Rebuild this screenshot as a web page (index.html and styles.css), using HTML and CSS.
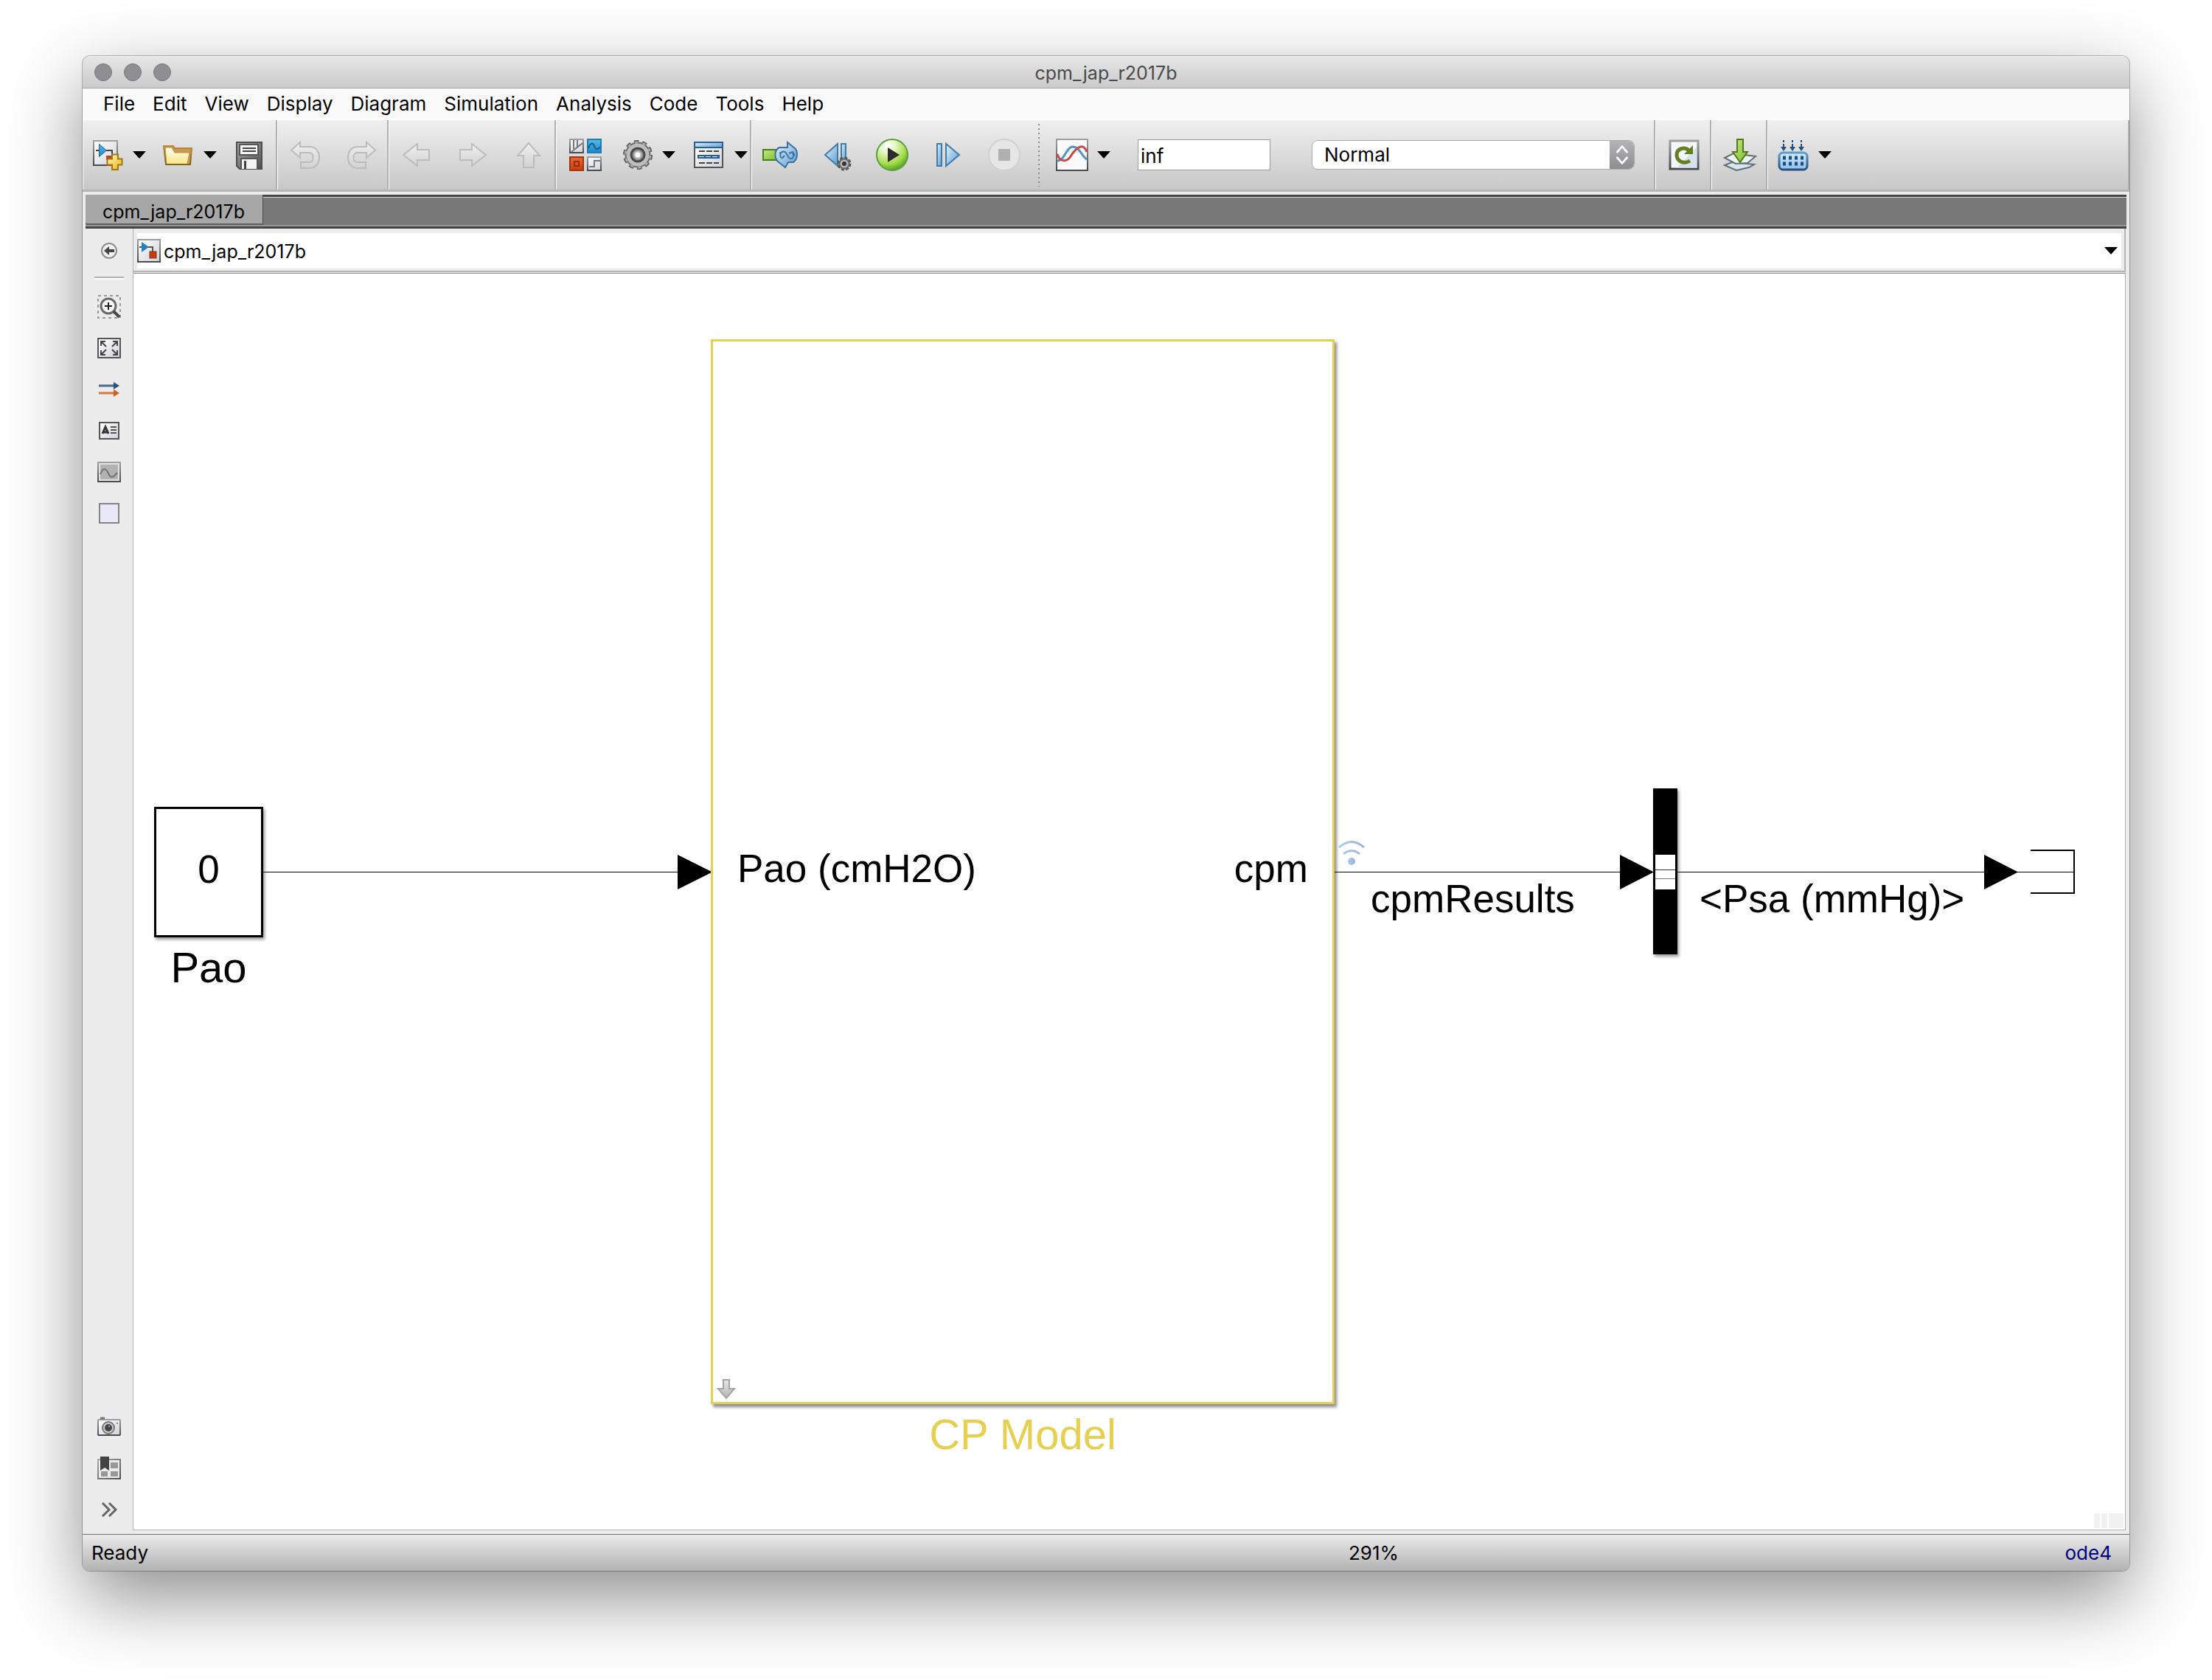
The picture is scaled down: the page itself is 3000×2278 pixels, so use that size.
FILE: index.html
```html
<!DOCTYPE html>
<html lang="en">
<head>
<meta charset="utf-8">
<title>cpm_jap_r2017b</title>
<link rel="stylesheet" href="styles.css">
</head>
<body>
<svg class="defs" width="0" height="0" aria-hidden="true">
  <defs>
    <linearGradient id="paper" x1="0" y1="0" x2="1" y2="1"><stop offset="0" stop-color="#fff"/><stop offset="1" stop-color="#cfd3da"/></linearGradient>
    <linearGradient id="frame" x1="0" y1="0" x2="0" y2="1"><stop offset="0" stop-color="#a0a0a0"/><stop offset="1" stop-color="#484a4c"/></linearGradient>
    <linearGradient id="gold" x1="0" y1="0" x2="1" y2="1"><stop offset="0" stop-color="#fffbd0"/><stop offset="1" stop-color="#e8b400"/></linearGradient>
    <linearGradient id="folder" x1="0" y1="0" x2="0" y2="1"><stop offset="0" stop-color="#fffdf2"/><stop offset="1" stop-color="#f7e684"/></linearGradient>
    <linearGradient id="wood" x1="0" y1="0" x2="0" y2="1"><stop offset="0" stop-color="#c08a30"/><stop offset="1" stop-color="#7d6020"/></linearGradient>
    <linearGradient id="steel" x1="0" y1="0" x2="1" y2="1"><stop offset="0" stop-color="#a8a8a8"/><stop offset="1" stop-color="#505050"/></linearGradient>
    <linearGradient id="ghost" x1="0" y1="0" x2="0" y2="1"><stop offset="0" stop-color="#f0f0f0"/><stop offset="1" stop-color="#d2d2d2"/></linearGradient>
    <linearGradient id="sky" x1="0" y1="0" x2="1" y2="1"><stop offset="0" stop-color="#e4f3fd"/><stop offset="1" stop-color="#5a9cd0"/></linearGradient>
    <linearGradient id="azure" x1="0" y1="0" x2="0" y2="1"><stop offset="0" stop-color="#5cbbe4"/><stop offset="1" stop-color="#1888c4"/></linearGradient>
    <linearGradient id="blueEdge" x1="0" y1="0" x2="0" y2="1"><stop offset="0" stop-color="#5f9cc8"/><stop offset="1" stop-color="#254e7c"/></linearGradient>
    <linearGradient id="rust" x1="0" y1="0" x2="0" y2="1"><stop offset="0" stop-color="#e8683c"/><stop offset="1" stop-color="#cc3c08"/></linearGradient>
    <linearGradient id="leaf" x1="0" y1="0" x2="1" y2="1"><stop offset="0" stop-color="#c4e880"/><stop offset="1" stop-color="#7cc030"/></linearGradient>
    <radialGradient id="play" cx=".35" cy=".2" r=".85"><stop offset="0" stop-color="#fff"/><stop offset=".3" stop-color="#e4f6c4"/><stop offset=".7" stop-color="#a4dc48"/><stop offset="1" stop-color="#4c9c20"/></radialGradient>
    <linearGradient id="cage" x1="0" y1="0" x2="0" y2="1"><stop offset="0" stop-color="#d8ecfc"/><stop offset="1" stop-color="#90bce8"/></linearGradient>
    <linearGradient id="arrowDown" x1="0" y1="0" x2="0" y2="1"><stop offset="0" stop-color="#e6e6e6"/><stop offset="1" stop-color="#b4b4b4"/></linearGradient>
    <linearGradient id="wave" x1="0" y1="0" x2="1" y2="0"><stop offset="0" stop-color="#a9d0ea"/><stop offset="1" stop-color="#9fb0d4"/></linearGradient>
  </defs>
</svg>

<main class="window">
  <header class="titlebar">
    <div class="lights"><button class="light" aria-label="Close"></button><button class="light" aria-label="Minimize"></button><button class="light" aria-label="Zoom"></button></div>
    <h1 class="title">cpm_jap_r2017b</h1>
  </header>

  <nav class="menubar" aria-label="Menu">
    <button class="menu">File</button>
    <button class="menu">Edit</button>
    <button class="menu">View</button>
    <button class="menu">Display</button>
    <button class="menu">Diagram</button>
    <button class="menu">Simulation</button>
    <button class="menu">Analysis</button>
    <button class="menu">Code</button>
    <button class="menu">Tools</button>
    <button class="menu">Help</button>
  </nav>

  <div class="toolbar" role="toolbar" aria-label="Model">
    <div class="group group-file">
      <div class="split">
        <button class="tool" aria-label="New model"><svg viewBox="0 0 48 48">
          <rect x="5" y="5" width="32" height="33" fill="url(#paper)" stroke="url(#frame)" stroke-width="2"/>
          <path d="M8 18h6M22 18h8v7" fill="none" stroke="#444" stroke-width="2"/>
          <path d="M12.500 9.500v17l10-8.500z" fill="url(#azure)" stroke="#1f649a" stroke-width="1"/>
          <rect x="22" y="25" width="8" height="6" fill="#b8452c"/>
          <path d="M30 23.500h8v6h5.500v8H38v6.500h-8v-6.500h-6.500v-8H30z" fill="url(#gold)" stroke="#a87412" stroke-width="2"/>
        </svg></button>
        <button class="caret" aria-label="New options"><svg viewBox="0 0 18 10"><path d="M0 0h18L9 10z"/></svg></button>
      </div>
      <div class="split">
        <button class="tool" aria-label="Open"><svg viewBox="0 0 48 48">
          <path d="M4 12h13l2 3h23l-2 22H7z" fill="#c59a55" stroke="url(#wood)" stroke-width="2"/>
          <path d="M6 14h9l4 7h20l-3 16H8z" fill="url(#folder)" stroke="#b89040" stroke-width="1"/>
          <path d="M7 37h33" stroke="#806424" stroke-width="2"/>
        </svg></button>
        <button class="caret" aria-label="Open options"><svg viewBox="0 0 18 10"><path d="M0 0h18L9 10z"/></svg></button>
      </div>
      <button class="tool" aria-label="Save"><svg viewBox="0 0 48 48">
        <path d="M7 7h34v36H11l-4-4z" fill="url(#steel)" stroke="#4e4e4e" stroke-width="2"/>
        <rect x="11" y="10" width="25" height="14" fill="#f4f4f4" stroke="#555" stroke-width="2"/>
        <path d="M15 15h18M15 19h18" stroke="#444" stroke-width="2"/>
        <path d="M13 43V29h22v14" fill="#f4f4f4" stroke="#555" stroke-width="2"/>
        <path d="M17 32h3v11h-3z" fill="#444"/>
      </svg></button>
    </div>

    <div class="group">
      <button class="tool" aria-label="Undo"><svg viewBox="0 0 48 48"><path d="M5 17.500L17 7v6h14c16 1 16 28 0 29H18v-8h12c6-1 6-12 0-13H17v7z" fill="url(#ghost)" stroke="#bcbcbc" stroke-width="2"/></svg></button>
      <button class="tool" aria-label="Redo"><svg viewBox="0 0 48 48"><path d="M43 17.500L31 7v6H18c-16 1-16 28 0 29h12v-8H18c-6-1-6-12 0-13h13v7z" fill="url(#ghost)" stroke="#bcbcbc" stroke-width="2"/></svg></button>
    </div>

    <div class="group">
      <button class="tool" aria-label="Back"><svg viewBox="0 0 48 48"><path d="M6 24L25 9v8h16v14H25v8z" fill="url(#ghost)" stroke="#bcbcbc" stroke-width="2"/></svg></button>
      <button class="tool" aria-label="Forward"><svg viewBox="0 0 48 48"><path d="M42 24L23 9v8H7v14h16v8z" fill="url(#ghost)" stroke="#bcbcbc" stroke-width="2"/></svg></button>
      <button class="tool" aria-label="Up to parent"><svg viewBox="0 0 48 48"><path d="M24 8L9 25h8v16h14V25h8z" fill="url(#ghost)" stroke="#bcbcbc" stroke-width="2"/></svg></button>
    </div>

    <div class="group group-config">
      <button class="tool" aria-label="Library browser"><svg viewBox="0 0 48 48">
        <rect x="3" y="3" width="18" height="18" fill="url(#paper)" stroke="url(#frame)" stroke-width="2"/>
        <path d="M8 4v12M13 4v9M5 20L20 8" fill="none" stroke="#777" stroke-width="2"/>
        <rect x="27" y="3" width="18" height="18" fill="url(#azure)" stroke="#1d7db4" stroke-width="2"/>
        <path d="M28 15c3-8 6-8 8-3s4 6 8 1" fill="none" stroke="#0f5c90" stroke-width="2"/>
        <rect x="3" y="27" width="18" height="18" fill="url(#rust)" stroke="#9c3610" stroke-width="2"/>
        <rect x="9" y="33" width="6" height="6" fill="#e0562c" stroke="#952e08" stroke-width="2"/>
        <rect x="27" y="27" width="18" height="18" fill="url(#paper)" stroke="url(#frame)" stroke-width="2"/>
        <path d="M29 40h7v-8h8" fill="none" stroke="#777" stroke-width="2"/>
      </svg></button>
      <div class="split">
        <button class="tool" aria-label="Model settings"><svg viewBox="0 0 48 48">
          <circle cx="25" cy="24" r="17" fill="none" stroke="#555" stroke-width="6" stroke-dasharray="6 4.680"/>
          <circle cx="25" cy="24" r="13" fill="none" stroke="#bdbdbd" stroke-width="6"/>
          <circle cx="25" cy="24" r="16.500" fill="none" stroke="#6a6a6a" stroke-width="2"/>
          <circle cx="25" cy="24" r="17" fill="none" stroke="#aaa" stroke-width="3" stroke-dasharray="4 6.680" stroke-dashoffset="-1"/>
          <circle cx="25" cy="24" r="9" fill="#909090" stroke="#484848" stroke-width="3"/>
          <circle cx="25" cy="24" r="4.500" fill="#fff" stroke="#bbb" stroke-width="2"/>
        </svg></button>
        <button class="caret" aria-label="Settings options"><svg viewBox="0 0 18 10"><path d="M0 0h18L9 10z"/></svg></button>
      </div>
      <div class="split">
        <button class="tool" aria-label="Model explorer"><svg viewBox="0 0 48 48">
          <rect x="4" y="7" width="38" height="34" fill="url(#paper)" stroke="#555" stroke-width="2"/>
          <rect x="4" y="7" width="38" height="7" fill="url(#sky)" stroke="#2d5f92" stroke-width="2"/>
          <rect x="8" y="24" width="30" height="5" fill="#245c9c"/>
          <path d="M10 19h27M10 35h27" stroke="#444" stroke-width="2" stroke-dasharray="8 2"/>
          <path d="M10 26.500h26" stroke="#fff" stroke-width="1" stroke-dasharray="7 2"/>
        </svg></button>
        <button class="caret" aria-label="Explorer options"><svg viewBox="0 0 18 10"><path d="M0 0h18L9 10z"/></svg></button>
      </div>
    </div>

    <div class="group group-run">
      <button class="tool" aria-label="Update diagram"><svg viewBox="0 0 48 48">
        <rect x="1" y="17" width="19" height="14" fill="url(#leaf)" stroke="#4c7c20" stroke-width="2"/>
        <path d="M34 7l11 9c3 4 3 14-3 18h-7l-4 7-10-8c-5-5-5-16 2-19h11z" fill="url(#sky)" stroke="#38709f" stroke-width="2"/>
        <path d="M25 28c-3-9 6-11 8-5l3 5c4 3 8-1 5-7M23 22l5-3M36 22l5-2 3 5M30 25l-4 4" fill="none" stroke="#3f74a4" stroke-width="2"/>
      </svg></button>
      <button class="tool" aria-label="Step back"><svg viewBox="0 0 48 48">
        <path d="M26 9v30L9 24z" fill="url(#sky)" stroke="#427aa8" stroke-width="2"/>
        <path d="M31 9h6v24h-6z" fill="url(#sky)" stroke="#427aa8" stroke-width="2"/>
        <circle cx="35" cy="36" r="8" fill="#aaa" stroke="#555" stroke-width="3" stroke-dasharray="4 2.280"/>
        <circle cx="35" cy="36" r="6.500" fill="#b8b8b8" stroke="#666" stroke-width="2"/>
        <circle cx="35" cy="36" r="3" fill="#333"/>
      </svg></button>
      <button class="tool" aria-label="Run"><svg viewBox="0 0 48 48"><circle cx="24" cy="24" r="21" fill="url(#play)" stroke="#5a9c40" stroke-width="2"/><path d="M18 14l16 10-16 10z" fill="#2c2c2c"/></svg></button>
      <button class="tool" aria-label="Step forward"><svg viewBox="0 0 48 48">
        <path d="M9 9h6v30H9z" fill="url(#sky)" stroke="#427aa8" stroke-width="2"/>
        <path d="M21 9v30l18-15z" fill="url(#sky)" stroke="#427aa8" stroke-width="2"/>
      </svg></button>
      <button class="tool" aria-label="Stop"><svg viewBox="0 0 48 48"><circle cx="24" cy="24" r="21" fill="#e6e6e6" stroke="#d0d0d0" stroke-width="2"/><rect x="16" y="16" width="16" height="16" fill="#b0b0b0"/></svg></button>
    </div>

    <div class="group group-options">
      <div class="split">
        <button class="tool" aria-label="Simulation data inspector"><svg viewBox="0 0 48 48">
          <rect x="3" y="3" width="42" height="42" fill="#fafafa" stroke="url(#frame)" stroke-width="2"/>
          <path d="M4 32c10 0 12-18 20-19 10-1 13 13 20 17" fill="none" stroke="#5094cc" stroke-width="3"/>
          <path d="M4 23c3 11 13 11 18 3 7-11 17-20 22-6" fill="none" stroke="#c84a4a" stroke-width="3"/>
        </svg></button>
        <button class="caret" aria-label="Inspector options"><svg viewBox="0 0 18 10"><path d="M0 0h18L9 10z"/></svg></button>
      </div>
      <input class="stop-time" type="text" value="inf" aria-label="Simulation stop time">
      <div class="mode">
        <select class="mode-select" aria-label="Simulation mode"><option>Normal</option><option>Accelerator</option></select>
        <svg class="mode-arrows" viewBox="0 0 33 40" aria-hidden="true"><path d="M10 16l7-8 7 8M10 24l7 8 7-8" fill="none" stroke="#fff" stroke-width="3" stroke-linecap="round" stroke-linejoin="round"/></svg>
      </div>
    </div>

    <div class="group group-single">
      <button class="tool" aria-label="Fast restart"><svg viewBox="0 0 48 48">
        <rect x="5" y="5" width="38" height="38" fill="#f4f8fb" stroke="url(#frame)" stroke-width="3"/>
        <path d="M42 12v30H14z" fill="#c4d4e4" opacity=".6"/>
        <path d="M31 19c-5-7-17-4-17 5s10 13 18 8" fill="none" stroke="#648020" stroke-width="5"/>
        <path d="M36 11v12H24z" fill="#648020"/>
      </svg></button>
    </div>

    <div class="group group-single">
      <button class="tool" aria-label="Build model"><svg viewBox="0 0 48 48">
        <path d="M3 38l10-4 30 3-7 4-17 4z" fill="#dce6ea" stroke="#5f7278" stroke-width="2"/>
        <path d="M3 28l12-6 30 4-11 9-16 1z" fill="#edf2f4" stroke="#5f7278" stroke-width="2"/>
        <path d="M20 3h8v17h6L24 34 14 20h6z" fill="url(#leaf)" stroke="#56781c" stroke-width="2"/>
      </svg></button>
    </div>

    <div class="group group-deploy">
      <div class="split">
        <button class="tool" aria-label="Deploy to hardware"><svg viewBox="0 0 48 48">
          <path d="M11 4v12M23 4v12M35 4v12" stroke="#1f5080" stroke-width="2" stroke-dasharray="3 2 8"/>
          <path d="M7 13h8l-4 6zM19 13h8l-4 6zM31 13h8l-4 6z" fill="#1f5080"/>
          <rect x="5" y="21" width="38" height="23" rx="5" fill="url(#cage)" stroke="url(#blueEdge)" stroke-width="3"/>
          <path d="M10 28h28M10 36h28" stroke="#17507c" stroke-width="5" stroke-dasharray="4 4"/>
        </svg></button>
        <button class="caret" aria-label="Deploy options"><svg viewBox="0 0 18 10"><path d="M0 0h18L9 10z"/></svg></button>
      </div>
    </div>
  </div>

  <div class="tabs" role="tablist"><button class="tab" role="tab" aria-selected="true">cpm_jap_r2017b</button></div>

  <div class="workspace">
    <aside class="palette" aria-label="Palette">
      <button class="pal" aria-label="Hide browser"><svg viewBox="0 0 32 32"><circle cx="16" cy="16" r="10" fill="#f0f0f0" stroke="#8c8c8c" stroke-width="2"/><path d="M9 16l7-6v4h7v4h-7v4z" fill="#444"/></svg></button>
      <hr class="rule">
      <div class="stack">
        <button class="pal" aria-label="Zoom"><svg viewBox="0 0 32 32">
          <rect x="1" y="1" width="30" height="30" fill="none" stroke="#999" stroke-width="2" stroke-dasharray="4 4"/>
          <circle cx="15" cy="15" r="10" fill="#f6f6f6" stroke="#6a6a6a" stroke-width="3"/>
          <path d="M15 10v10M10 15h10" stroke="#222" stroke-width="2"/><path d="M22 22l8 8" stroke="#4a4a4a" stroke-width="4"/>
        </svg></button>
        <button class="pal" aria-label="Fit to view"><svg viewBox="0 0 32 32">
          <rect x="1" y="3" width="30" height="26" fill="url(#paper)" stroke="#555" stroke-width="2"/>
          <path d="M5 13V7h6M6 8l6 6M27 13V7h-6M26 8l-6 6M5 19v6h6M6 24l6-6M27 19v6h-6M26 24l-6-6" fill="none" stroke="#444" stroke-width="2"/>
        </svg></button>
        <button class="pal" aria-label="Sample time colors"><svg viewBox="0 0 32 32">
          <path d="M2 11h21" stroke="#4a6a94" stroke-width="3"/><path d="M22 6l8 5-8 5z" fill="#2c4f86"/>
          <path d="M2 21h21" stroke="#d87840" stroke-width="3"/><path d="M22 16l8 5-8 5z" fill="#d4601c"/>
        </svg></button>
        <button class="pal" aria-label="Annotation"><svg viewBox="0 0 32 32">
          <rect x="3" y="5" width="26" height="22" fill="url(#paper)" stroke="#555" stroke-width="2"/>
          <path d="M7 20l4-9 4 9M8 18h6" fill="none" stroke="#333" stroke-width="3"/>
          <path d="M18 11h8M18 15h8M18 19h8" stroke="#555" stroke-width="2"/>
        </svg></button>
        <button class="pal" aria-label="Image"><svg viewBox="0 0 32 32">
          <rect x="1" y="3" width="30" height="26" fill="#e4e4e4" stroke="url(#frame)" stroke-width="2"/>
          <rect x="4" y="6" width="24" height="20" fill="#b2b2b2"/>
          <path d="M4 19c4-10 8-8 11-1s6 6 12-1" fill="none" stroke="#737373" stroke-width="2"/>
        </svg></button>
        <button class="pal" aria-label="Area"><svg viewBox="0 0 32 32"><rect x="3" y="3" width="26" height="26" fill="#e8e8f6" stroke="#858585" stroke-width="2"/></svg></button>
      </div>
      <div class="stack stack-end">
        <button class="pal" aria-label="Screenshot"><svg viewBox="0 0 32 32">
          <rect x="1" y="6" width="30" height="21" rx="1" fill="url(#paper)" stroke="url(#frame)" stroke-width="2"/>
          <path d="M4 4h6" stroke="#777" stroke-width="3"/>
          <circle cx="15" cy="17" r="8" fill="#ccc" stroke="#777" stroke-width="2"/><circle cx="15" cy="17" r="5" fill="#444"/><circle cx="16" cy="15" r="1" fill="#bbb"/>
          <circle cx="27" cy="11" r="1" fill="#666"/>
        </svg></button>
        <button class="pal" aria-label="Model browser"><svg viewBox="0 0 32 32">
          <rect x="1" y="4" width="30" height="26" fill="#ececec" stroke="url(#steel)" stroke-width="2"/>
          <path d="M18 8h10v8H18zM5 20h9v7H5zM18 20h10v7H18z" fill="#989898"/>
          <path d="M4 0h12v19l-6-4-6 4z" fill="#444"/>
        </svg></button>
        <button class="pal" aria-label="Show more"><svg viewBox="0 0 32 32"><path d="M7 7l9 9-9 9M16 7l9 9-9 9" fill="none" stroke="#666" stroke-width="3"/></svg></button>
      </div>
    </aside>

    <section class="editor">
      <div class="address">
        <div class="crumbs">
          <svg class="crumb-icon" viewBox="0 0 32 32" aria-hidden="true">
            <rect x="1" y="1" width="30" height="30" fill="url(#paper)" stroke="url(#frame)" stroke-width="2"/>
            <path d="M3 11h4M15 11h6v6" fill="none" stroke="#555" stroke-width="2"/>
            <path d="M6 4v14l10-7z" fill="#2a80ba"/>
            <rect x="17" y="17" width="9" height="9" fill="#c83c10" stroke="#922c0c" stroke-width="1"/>
          </svg>
          <a class="crumb" href="#model">cpm_jap_r2017b</a>
          <button class="caret caret-end" aria-label="Show path"><svg viewBox="0 0 18 10"><path d="M0 0h18L9 10z"/></svg></button>
        </div>
      </div>

      <div class="canvas" id="model">
        <svg class="wires" aria-hidden="true">
          <g stroke="#000" stroke-width="1">
            <path d="M176 811.500h580M1629 811.500h430M2094 811.500h538"/>
          </g>
          <path d="M738 788l47 23.500-47 23.500zM2016 788l46 23.500-46 23.500zM2510 788l46 23.500-46 23.500z"/>
          <path d="M2573 782h59v58h-59" fill="none" stroke="#000" stroke-width="2"/>
        </svg>

        <figure class="node node-pao">
          <div class="block">0</div>
          <figcaption class="name">Pao</figcaption>
        </figure>

        <figure class="node node-model">
          <div class="block block-model"><span>Pao (cmH2O)</span><span>cpm</span>
            <svg class="expand" viewBox="0 0 26 28" aria-hidden="true"><path d="M9 1h8v12h7L13 26 2 13h7z" fill="url(#arrowDown)" stroke="#a4a4a4" stroke-width="2"/></svg>
          </div>
          <figcaption class="name name-model">CP Model</figcaption>
        </figure>

        <svg class="logging" viewBox="0 0 36 36" aria-hidden="true"><g fill="none" stroke="url(#wave)" stroke-width="3"><path d="M1 10q17-15 34 0M7 19q11-9 22 0"/></g><circle cx="18" cy="29" r="5" fill="url(#wave)"/></svg>
        <span class="signal signal-results">cpmResults</span>
        <div class="selector"><div class="selector-face"></div></div>
        <span class="signal signal-psa">&lt;Psa (mmHg)&gt;</span>

        <div class="grip" aria-hidden="true"><i></i><i></i><i class="wide"></i></div>
      </div>
    </section>
  </div>

  <footer class="status">
    <span>Ready</span><span>291%</span><a class="solver" href="#solver">ode4</a>
  </footer>
</main>
</body>
</html>
```

FILE: styles.css
```css
* { box-sizing: border-box; }

body {
  margin: 0;
  min-height: 100vh;
  padding: 76px 112px 148px;
  display: flex;
  background: #fff;
  color: #000;
  font: 26px/32px Inter, "Liberation Sans", sans-serif;
}

button, input, select { font: inherit; color: inherit; }
button { border: 0; padding: 0; background: none; }
svg { display: block; }
.defs { position: absolute; }

.window {
  flex: 1;
  min-width: 0;
  display: flex;
  flex-direction: column;
  background: #ececec;
  border-radius: 10px;
  overflow: hidden;
  box-shadow: 0 0 0 1px rgba(0, 0, 0, .26), 0 36px 100px rgba(0, 0, 0, .45);
}

/* title bar */
.titlebar {
  display: grid;
  grid-template-columns: 1fr auto 1fr;
  align-items: center;
  height: 44px;
  padding: 0 16px;
  background: linear-gradient(#e6e6e6, #cacaca);
  border-top: 1px solid #f4f4f4;
  border-bottom: 1px solid #a0a0a0;
}
.lights { display: flex; gap: 16px; }
.light { width: 24px; height: 24px; border-radius: 50%; background: #8f8e93; border: 1px solid #77767b; }
.title { margin: 0; padding-top: 2px; font-weight: 400; color: #4a4a4a; }
.title, .tab, .crumb { font-size: 25px; }

/* menus */
.menubar { display: flex; gap: 24px; height: 42px; padding: 0 28px; background: #fafafa; }

/* toolbar */
.toolbar { display: flex; height: 98px; background: linear-gradient(#efefef, #c8c8c8); border-top: 1px solid #fff; border-bottom: 3px solid #b6b6b6; }
.group {
  display: flex;
  align-items: center;
  gap: 28px;
  padding: 0 11px 0 13px;
  border-left: 1px solid #fff;
  border-right: 2px solid #b0b0b0;
}
.group-file { gap: 20px; padding: 0 12px 0 9px; }
.group-config { gap: 22px; padding: 0 3px 0 15px; }
.group-run { padding: 0 22px 0 14px; border-right: 0; }
.group-options { position: relative; gap: 0; padding: 0 26px 0 22px; border-left: 0; }
.group-options::before {
  content: "";
  position: absolute;
  left: 0;
  top: 5px;
  bottom: 4px;
  width: 2px;
  background: repeating-linear-gradient(#888 0 2px, transparent 2px 6px);
}
.group-single { padding: 0 11px 0 14px; }
.group-deploy { flex: 1; padding: 0 11px 0 10px; }
.split { display: flex; align-items: center; gap: 10px; }
.tool, .tool svg { width: 48px; height: 48px; }
.caret, .caret svg { width: 18px; height: 10px; }

.stop-time {
  width: 180px;
  height: 42px;
  margin: 0 56px 0 37px;
  padding: 3px 3px 0;
  border: 1px solid #9c9c9c;
  background: #fff;
}
.mode { position: relative; width: 438px; height: 40px; border-radius: 8px; overflow: hidden; border: 1px solid #aaa; background: #fff; }
.mode-select { appearance: none; width: 100%; height: 100%; padding: 0 48px 0 16px; border: 0; background: #fff; }
.mode-arrows { position: absolute; right: 0; top: 0; width: 33px; height: 100%; background: linear-gradient(#b4b3b8, #8d8c91); pointer-events: none; }

/* document tabs */
.tabs {
  display: flex;
  height: 46px;
  margin: 4px 4px 0;
  background: #787878;
  border-top: 3px solid #444;
  border-bottom: 3px solid #444;
  box-shadow: inset 0 1px #ddd, inset 0 -2px #999;
}
.tab {
  height: 41px;
  margin-top: -3px;
  padding: 6px 24px 0 23px;
  background: #a7a7a7;
  border-right: 1px solid #4a4a4a;
  border-bottom: 2px solid #5c5c5c;
  border-radius: 0 0 0 4px;
}

/* work area */
.workspace { flex: 1; display: flex; }
.palette { width: 68px; padding: 14px 0 17px 4px; display: flex; flex-direction: column; align-items: center; }
.pal, .pal svg { width: 32px; height: 32px; }
.rule { width: 40px; height: 4px; margin: 19px 0 21px; border: 0; border-top: 2px solid #adadad; border-bottom: 2px solid #fff; }
.stack { display: flex; flex-direction: column; gap: 24px; }
.stack-end { margin-top: auto; }

.editor { flex: 1; min-width: 0; margin: 0 5px 5px 0; display: flex; flex-direction: column; border-left: 1px solid #b4b4b4; }
.address { height: 59px; padding: 6px 4px 3px 5px; border-right: 2px solid #b5b5b5; border-bottom: 2px solid #b5b5b5; }
.crumbs { display: flex; align-items: center; gap: 4px; height: 48px; padding-right: 5px; background: #fff; }
.crumb-icon { width: 32px; height: 32px; }
.crumb { padding-top: 2px; color: inherit; text-decoration: none; }
.caret-end { margin-left: auto; }

.canvas { position: relative; flex: 1; margin-top: 1px; background: #fff; border: 1px solid #b4b4b4; border-top-color: #8c8c8c; border-left: 0; font: 53px/64px "Liberation Sans", Arial, sans-serif; white-space: nowrap; }
.wires { position: absolute; inset: 0; width: 100%; height: 100%; }

.node { position: absolute; margin: 0; }
.block {
  display: flex;
  justify-content: center;
  align-items: center;
  height: 177px;
  padding-bottom: 8px;
  border: 3px solid #000;
  background: #fff;
  box-shadow: 2px 3px 4px rgba(0, 0, 0, .4);
}
.name { margin-top: 7px; font-size: 58px; line-height: 68px; text-align: center; }
.node-pao { left: 28px; top: 723px; width: 148px; }
.node-model { left: 783px; top: 89px; width: 846px; }
.block-model {
  justify-content: space-between;
  height: 1444px;
  padding: 0 33px 8px;
  border-color: #e6d050;
  box-shadow: 3px 4px 4px rgba(0, 0, 0, .45);
}
.name-model { color: #e6d050; }
.expand { position: absolute; left: 8px; top: 1410px; width: 26px; height: 28px; }
.logging { position: absolute; left: 1634px; top: 768px; width: 36px; height: 36px; }
.signal { position: absolute; top: 816px; }
.signal-results { left: 1678px; }
.signal-psa { left: 2124px; }
.selector { position: absolute; left: 2061px; top: 698px; width: 33px; height: 225px; padding: 90px 3px 88px; background: #000; box-shadow: 2px 3px 4px rgba(0, 0, 0, .4); }
.selector-face { height: 47px; background: linear-gradient(#fff 20px, #333 20px 21px, #fff 21px 32px, #777 32px 33px, #fff 33px); }
.grip { position: absolute; right: 2px; bottom: 2px; display: flex; gap: 2px; }
.grip i { width: 8px; height: 20px; background: #f1f1f1; }
.grip .wide { width: 20px; }

/* status bar */
.status {
  display: grid;
  grid-template-columns: 637fr 363fr auto;
  align-items: center;
  height: 50px;
  padding: 0 24px 0 12px;
  background: linear-gradient(#eaeaea, #b2b2b2);
  border-top: 1px solid #707070;
}
.solver { color: #000080; text-decoration: none; }
```
